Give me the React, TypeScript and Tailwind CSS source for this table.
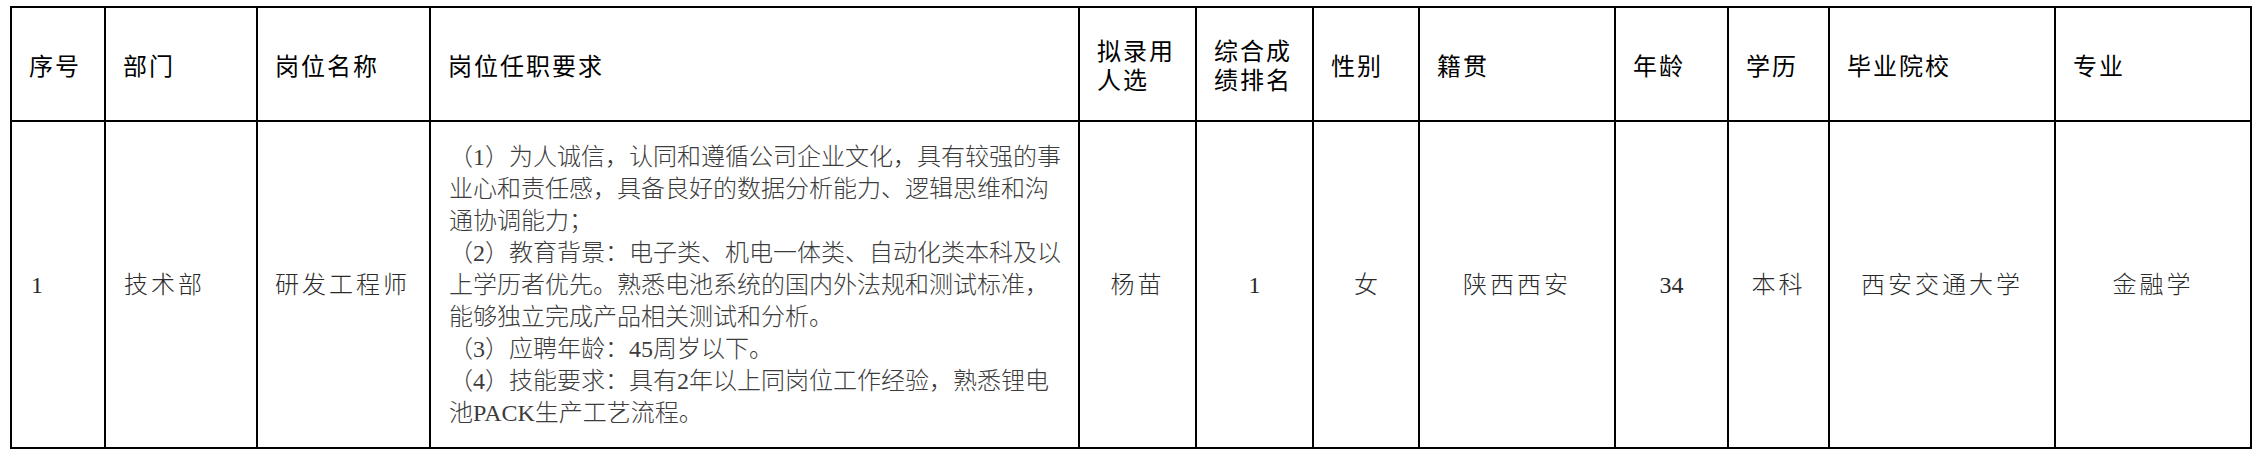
import React from 'react'

const sans = '[font-family:"Noto_Sans_CJK_SC","Noto_Sans",sans-serif]'

const cols = [94, 152, 173, 649, 117, 117, 106, 196, 113, 101, 226, 196]

const headers: React.ReactNode[] = [
  '序号',
  '部门',
  '岗位名称',
  '岗位任职要求',
  <>
    <div>拟录用</div>
    <div>人选</div>
  </>,
  <>
    <div>综合成</div>
    <div>绩排名</div>
  </>,
  '性别',
  '籍贯',
  '年龄',
  '学历',
  '毕业院校',
  '专业',
]

const requirements = [
  '（1）为人诚信，认同和遵循公司企业文化，具有较强的事',
  '业心和责任感，具备良好的数据分析能力、逻辑思维和沟',
  '通协调能力；',
  '（2）教育背景：电子类、机电一体类、自动化类本科及以',
  '上学历者优先。熟悉电池系统的国内外法规和测试标准，',
  '能够独立完成产品相关测试和分析。',
  '（3）应聘年龄：45周岁以下。',
  '（4）技能要求：具有2年以上同岗位工作经验，熟悉锂电',
  '池PACK生产工艺流程。',
]

export default function App() {
  return (
    <div className="w-[2264px] h-[454px] bg-white pt-[6px] pl-[10px]">
      <table className="w-[2242px] table-fixed border-collapse border-2 border-black">
        <colgroup>
          {cols.map((w, i) => (
            <col key={i} style={{ width: w }} />
          ))}
        </colgroup>
        <thead>
          <tr className="h-[114px]">
            {headers.map((h, i) => (
              <th
                key={i}
                className={`border-2 border-black px-[17px] text-left align-middle font-normal text-[24px] leading-[29px] tracking-[2px] text-black whitespace-nowrap ${sans}`}
              >
                {h}
              </th>
            ))}
          </tr>
        </thead>
        <tbody className='font-light text-[24px] text-[#2a2a2a] [font-family:"Liberation_Serif","Noto_Sans_CJK_SC",serif]'>
          <tr className="h-[327px]">
            <td className="border-2 border-black pl-[19px] align-middle">1</td>
            <td className="border-2 border-black pl-[18px] align-middle tracking-[3px]">技术部</td>
            <td className="border-2 border-black pl-[17px] align-middle tracking-[3px] whitespace-nowrap">研发工程师</td>
            <td className="border-2 border-black pl-[18px] align-middle text-[#3c3c3c] leading-[32px] whitespace-nowrap">
              {requirements.map((line, i) => (
                <div key={i}>{line}</div>
              ))}
            </td>
            <td className="border-2 border-black text-center align-middle tracking-[3px]">杨苗</td>
            <td className="border-2 border-black text-center align-middle">1</td>
            <td className="border-2 border-black text-center align-middle">女</td>
            <td className="border-2 border-black text-center align-middle tracking-[3px]">陕西西安</td>
            <td className="border-2 border-black text-center align-middle">34</td>
            <td className="border-2 border-black text-center align-middle tracking-[3px]">本科</td>
            <td className="border-2 border-black text-center align-middle tracking-[3px]">西安交通大学</td>
            <td className="border-2 border-black text-center align-middle tracking-[3px]">金融学</td>
          </tr>
        </tbody>
      </table>
    </div>
  )
}
